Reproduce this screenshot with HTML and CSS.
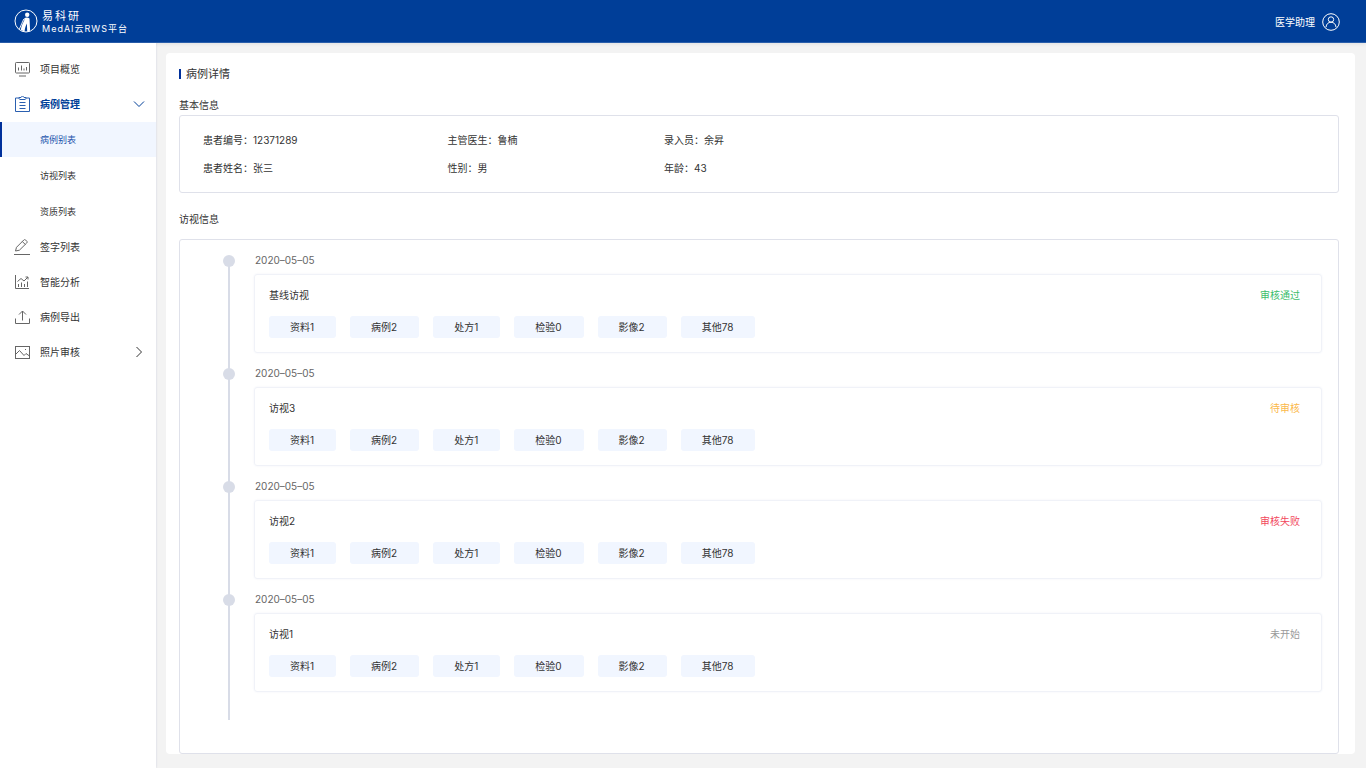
FILE: index.html
```html
<!DOCTYPE html>
<html lang="zh-CN">
<head>
<meta charset="utf-8">
<meta name="viewport" content="width=device-width, initial-scale=1">
<title>病例详情</title>
<link rel="stylesheet" href="styles.css">
</head>
<body>
<header class="topbar">
  <div class="brand">
    <svg class="brand-logo" viewBox="0 0 24 24" aria-hidden="true">
      <circle cx="12" cy="12" r="11" fill="none" stroke="#fff" stroke-width="1"/>
      <circle cx="13.200" cy="5.700" r="2.200" fill="#fff"/>
      <path d="M10.300 9.300c1.500-1 3.700-1 5.200.2l.6 11.700-1 1.200h-1.900l-.3-7.900c-1.200 2.200-2 4.800-2.300 7.800l-3.800-1.100c.4-3.900 2.100-7.200 3.500-9.900z" fill="#fff"/>
      <path d="M9.800 10L5.400 20" fill="none" stroke="#fff" stroke-width=".9"/>
    </svg>
    <div class="brand-text">
      <span class="brand-name">易科研</span>
      <span class="brand-sub">MedAI云RWS平台</span>
    </div>
  </div>
  <a class="user" href="#">
    <span>医学助理</span>
    <svg class="user-icon" viewBox="0 0 18 18" aria-hidden="true">
      <circle cx="9" cy="9" r="8.300"/><circle cx="9" cy="6.500" r="2.700"/>
      <path d="M4 14.200c.3-3.200 2.300-5 5-5s4.700 1.800 5 5"/>
    </svg>
  </a>
</header>
<div class="layout">
  <nav class="sidebar">
    <a class="nav-item" href="#">
      <svg class="icon" viewBox="0 0 16 16" aria-hidden="true"><rect x="1.500" y="1.500" width="14" height="10.500" rx=".8"/><path d="M4.500 6.500v3M7.500 4.500v5M10 7.500v2M12.500 6v3.500M5 15h7"/></svg>
      <span>项目概览</span>
    </a>
    <a class="nav-item nav-item-open" href="#">
      <svg class="icon" viewBox="0 0 16 16" aria-hidden="true"><path d="M5 2H1.500v13.500h14V2H12"/><path d="M5 1.500h2C7.200-.1 9.800-.1 10 1.500h2C12 3 11.500 3.500 11 3.500H6C5.500 3.500 5 3 5 1.500zM5.500 6.500h6M5.500 9.500h6M5.500 12.500h6"/></svg>
      <span>病例管理</span>
      <svg class="chevron" viewBox="0 0 12 12" aria-hidden="true"><path d="M1 3.500l5 5 5-5"/></svg>
    </a>
    <div class="subnav">
      <a class="subnav-item subnav-item-active" href="#">病例别表</a>
      <a class="subnav-item" href="#">访视列表</a>
      <a class="subnav-item" href="#">资质列表</a>
    </div>
    <a class="nav-item" href="#">
      <svg class="icon" viewBox="0 0 16 16" aria-hidden="true"><path d="M1.500 12l1-3.700L9.800 1c.6-.6 1.300-.5 1.900.1l1 1c.6.6.6 1.300 0 1.900L5.400 11.200zM8.300 2.500l3 3M0 15.500h16"/></svg>
      <span>签字列表</span>
    </a>
    <a class="nav-item" href="#">
      <svg class="icon" viewBox="0 0 16 16" aria-hidden="true"><path d="M1.500 1v13.500H15M4.500 13v-3M7.500 13V8.500M10.500 13v-3M13.500 13V7.500M3.500 7.500l3.500-3 3 2.500 4-4M11.500 3H14v2.500"/></svg>
      <span>智能分析</span>
    </a>
    <a class="nav-item" href="#">
      <svg class="icon" viewBox="0 0 16 16" aria-hidden="true"><path d="M8.500 11.500V2M5 5.500L8.500 2 12 5.500M1.500 9.500v5h14v-5"/></svg>
      <span>病例导出</span>
    </a>
    <a class="nav-item" href="#">
      <svg class="icon" viewBox="0 0 16 16" aria-hidden="true"><rect x="1.500" y="2.500" width="14" height="12"/><path d="M1.500 10.500l4-4 4.500 5 2-2 3.500 2.500M11 5.500h1"/></svg>
      <span>照片审核</span>
      <svg class="chevron" viewBox="0 0 12 12" aria-hidden="true"><path d="M3.500 1l5 5-5 5"/></svg>
    </a>
  </nav>
  <main class="main">
    <section class="panel">
      <h1 class="page-title">病例详情</h1>
      <h2 class="section-title">基本信息</h2>
      <dl class="info">
        <div class="info-item"><dt>患者编号：</dt><dd>12371289</dd></div>
        <div class="info-item"><dt>主管医生：</dt><dd>鲁楠</dd></div>
        <div class="info-item"><dt>录入员：</dt><dd>余昇</dd></div>
        <div class="info-item"><dt>患者姓名：</dt><dd>张三</dd></div>
        <div class="info-item"><dt>性别：</dt><dd>男</dd></div>
        <div class="info-item"><dt>年龄：</dt><dd>43</dd></div>
      </dl>
      <h2 class="section-title section-title-visits">访视信息</h2>
      <div class="visits">
        <ol class="timeline">
          <li class="visit">
            <time class="visit-date" datetime="2020-05-05">2020–05–05</time>
            <article class="card">
              <div class="card-head"><h3 class="card-title">基线访视</h3><span class="status status-pass">审核通过</span></div>
              <div class="chips"><button class="chip" type="button">资料1</button><button class="chip" type="button">病例2</button><button class="chip" type="button">处方1</button><button class="chip" type="button">检验0</button><button class="chip" type="button">影像2</button><button class="chip" type="button">其他78</button></div>
            </article>
          </li>
          <li class="visit">
            <time class="visit-date" datetime="2020-05-05">2020–05–05</time>
            <article class="card">
              <div class="card-head"><h3 class="card-title">访视3</h3><span class="status status-wait">待审核</span></div>
              <div class="chips"><button class="chip" type="button">资料1</button><button class="chip" type="button">病例2</button><button class="chip" type="button">处方1</button><button class="chip" type="button">检验0</button><button class="chip" type="button">影像2</button><button class="chip" type="button">其他78</button></div>
            </article>
          </li>
          <li class="visit">
            <time class="visit-date" datetime="2020-05-05">2020–05–05</time>
            <article class="card">
              <div class="card-head"><h3 class="card-title">访视2</h3><span class="status status-fail">审核失败</span></div>
              <div class="chips"><button class="chip" type="button">资料1</button><button class="chip" type="button">病例2</button><button class="chip" type="button">处方1</button><button class="chip" type="button">检验0</button><button class="chip" type="button">影像2</button><button class="chip" type="button">其他78</button></div>
            </article>
          </li>
          <li class="visit">
            <time class="visit-date" datetime="2020-05-05">2020–05–05</time>
            <article class="card">
              <div class="card-head"><h3 class="card-title">访视1</h3><span class="status status-idle">未开始</span></div>
              <div class="chips"><button class="chip" type="button">资料1</button><button class="chip" type="button">病例2</button><button class="chip" type="button">处方1</button><button class="chip" type="button">检验0</button><button class="chip" type="button">影像2</button><button class="chip" type="button">其他78</button></div>
            </article>
          </li>
        </ol>
      </div>
    </section>
  </main>
</div>
</body>
</html>
```
FILE: styles.css
```css
*, *::before, *::after { box-sizing: border-box; }
body {
  margin: 0;
  min-height: 100vh;
  display: flex;
  flex-direction: column;
  background: #f3f3f3;
  color: #333;
  font: 10px/20px Inter, "Noto Sans CJK SC", sans-serif;
}
a { color: inherit; text-decoration: none; }
h1, h2, h3, dl, dd, ol { margin: 0; padding: 0; font-weight: 400; font-size: 10px; }
svg { fill: none; stroke: currentColor; flex: none; }

.topbar {
  display: flex;
  align-items: center;
  justify-content: space-between;
  height: 43px;
  padding: 0 26px 0 14px;
  background: #003e98;
  border-bottom: 1px solid #2a5fab;
  color: #fff;
  box-shadow: 0 1px 4px rgba(0, 0, 0, .08);
}
.brand { display: flex; align-items: center; gap: 4px; }
.brand-logo { width: 24px; height: 24px; stroke: none; }
.brand-text { display: flex; flex-direction: column; padding-top: 2px; }
.brand-name { font-size: 11px; line-height: 14px; letter-spacing: 2px; }
.brand-sub { font-size: 9px; line-height: 12px; letter-spacing: 1px; }
.user { display: flex; align-items: center; gap: 7px; padding-top: 2px; }
.user-icon { width: 18px; height: 18px; }

.layout { display: flex; flex: 1; }
.sidebar {
  flex: none;
  width: 156px;
  padding-top: 8px;
  background: #fff;
  box-shadow: 0 0 2px rgba(0, 40, 120, .16);
}
.nav-item {
  display: flex;
  align-items: center;
  gap: 10px;
  height: 35px;
  padding: 0 11px 0 14px;
}
.nav-item-open { color: #003e98; font-weight: 700; }
.icon { width: 16px; height: 16px; stroke-width: 1; color: #666; }
.nav-item-open .icon { color: #2a5fb0; }
.chevron { width: 12px; height: 12px; margin-left: auto; }
.subnav { display: flex; flex-direction: column; gap: 1px; margin-top: 1px; }
.subnav-item { padding-left: 40px; font-size: 9px; line-height: 35px; }
.subnav-item-active {
  padding-left: 38px;
  border-left: 2px solid #00309b;
  background: #f1f6ff;
  color: #1d54ac;
}

.main { flex: 1; display: flex; min-width: 0; padding: 10px 11px 14px 10px; }
.panel {
  flex: 1;
  display: flex;
  flex-direction: column;
  min-width: 0;
  padding: 11px 16px 0 13px;
  background: #fff;
  border-radius: 4px;
}
.page-title { display: flex; align-items: center; gap: 5px; margin-bottom: 11px; font-size: 11px; }
.page-title::before { content: ""; width: 2px; height: 10px; background: #00309b; }
.info {
  display: grid;
  grid-template-columns: 22% 39fr 117fr;
  row-gap: 8px;
  padding: 14px 24px 14px 23px;
  border: 1px solid #dfe1ea;
  border-radius: 3px;
}
.info-item { display: flex; }
.section-title-visits { margin: 16px 0 10px; }
.visits { flex: 1; padding: 10px 16px 33px 43px; border: 1px solid #dfe1ea; border-radius: 3px; }
.timeline { position: relative; padding-bottom: 18px; list-style: none; }
.timeline::before {
  content: "";
  position: absolute;
  top: 11px;
  bottom: 0;
  left: 5px;
  width: 2px;
  background: #d8dce7;
}
.visit { position: relative; padding: 0 0 10px 31px; }
.visit::before {
  content: "";
  position: absolute;
  top: 5px;
  left: 0;
  width: 12px;
  height: 12px;
  border-radius: 50%;
  background: #d8dce7;
}
.visit-date { display: block; padding-left: 1px; color: #666; }
.card {
  margin-top: 4px;
  padding: 10px 21px 14px 14px;
  border: 1px solid #f0f2f8;
  border-radius: 3px;
  box-shadow: 0 0 2px rgba(60, 90, 160, .08);
}
.card-head { display: flex; justify-content: space-between; margin-bottom: 11px; }
.status-pass { color: #3dbd6c; }
.status-wait { color: #fbb94a; }
.status-fail { color: #f2485c; }
.status-idle { color: #999; }
.chips { display: flex; flex-wrap: wrap; gap: 14px; }
.chip {
  height: 22px;
  padding: 0 22px 0 21px;
  border: 0;
  border-radius: 3px;
  background: #f1f6ff;
  color: #333;
  font: inherit;
}
```
